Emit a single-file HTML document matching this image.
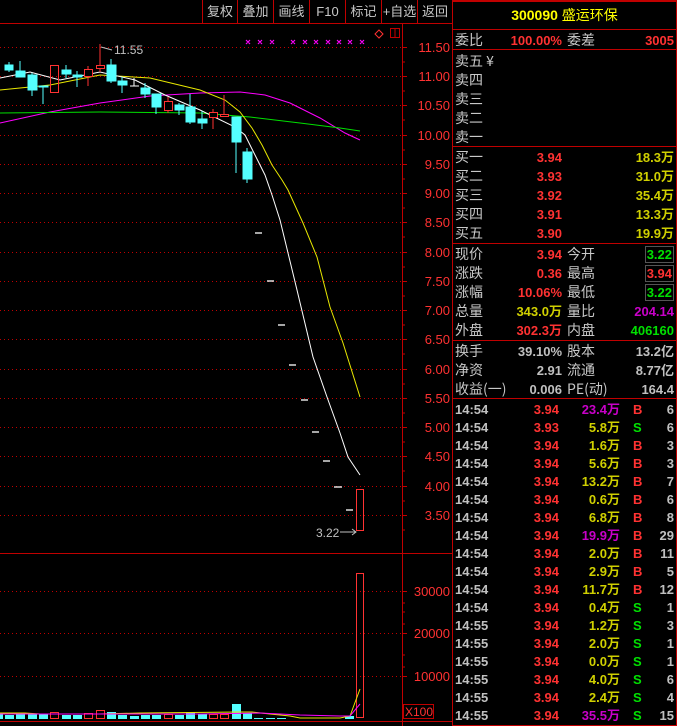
<!DOCTYPE html>
<html><head><meta charset="utf-8"><style>
*{margin:0;padding:0;box-sizing:border-box}
body{width:677px;height:726px;background:#000;overflow:hidden;position:relative;font-family:"Liberation Sans","Noto Sans CJK SC",sans-serif}
.r{position:absolute;left:452px;width:225px;height:19px;font-size:14px;line-height:19px}
.r span{position:absolute;white-space:nowrap}
.l{left:3px;color:#c8c8c8;font-family:"Noto Sans CJK SC",sans-serif}
.l2{left:115px;color:#c8c8c8;font-family:"Noto Sans CJK SC",sans-serif}
.v1{right:115px;font-weight:bold;font-size:13px}
.v2{right:3px;font-weight:bold;font-size:13px}
.red{color:#ff3232}.yel{color:#d0d000}.grn{color:#00e000}.mag{color:#c800c8}.gry{color:#c0c0c0}
.hl{position:absolute;left:452px;width:225px;height:1px;background:#c00000}
.box{border:1px solid #555;padding:0 1px;line-height:15px;top:1px}
.t{position:absolute;left:452px;width:225px;height:18px;font-size:13px;font-weight:bold;line-height:18px}
.t span{position:absolute;white-space:nowrap}
.btn{position:absolute;top:0;height:23px;line-height:23px;color:#c8c8c8;font-size:13px;text-align:center;border-left:1px solid #c00000;font-family:"Liberation Sans","Noto Sans CJK SC",sans-serif}
</style></head><body>
<svg width="452" height="726" style="position:absolute;left:0;top:0" xmlns="http://www.w3.org/2000/svg">
<line x1="0" y1="23.5" x2="452" y2="23.5" stroke="#c00000"/>
<line x1="402.5" y1="24" x2="402.5" y2="726" stroke="#c00000"/>
<line x1="0" y1="553.5" x2="452" y2="553.5" stroke="#c00000"/>
<line x1="0" y1="721.5" x2="452" y2="721.5" stroke="#c00000"/>
<g stroke="#c00000" stroke-dasharray="1,3">
<line x1="0" y1="47.5" x2="402" y2="47.5"/><line x1="0" y1="76.5" x2="402" y2="76.5"/><line x1="0" y1="105.5" x2="402" y2="105.5"/><line x1="0" y1="135.5" x2="402" y2="135.5"/><line x1="0" y1="164.5" x2="402" y2="164.5"/><line x1="0" y1="193.5" x2="402" y2="193.5"/><line x1="0" y1="222.5" x2="402" y2="222.5"/><line x1="0" y1="252.5" x2="402" y2="252.5"/><line x1="0" y1="281.5" x2="402" y2="281.5"/><line x1="0" y1="310.5" x2="402" y2="310.5"/><line x1="0" y1="339.5" x2="402" y2="339.5"/><line x1="0" y1="369.5" x2="402" y2="369.5"/><line x1="0" y1="398.5" x2="402" y2="398.5"/><line x1="0" y1="427.5" x2="402" y2="427.5"/><line x1="0" y1="456.5" x2="402" y2="456.5"/><line x1="0" y1="486.5" x2="402" y2="486.5"/><line x1="0" y1="515.5" x2="402" y2="515.5"/>
<line x1="0" y1="591.5" x2="402" y2="591.5"/><line x1="0" y1="633.5" x2="402" y2="633.5"/><line x1="0" y1="676.5" x2="402" y2="676.5"/>
</g>
<g stroke="#c00000">
<path d="M402 47.5h5M402 62h3M402 76.5h5M402 91h3M402 105.5h5M402 120h3M402 135.5h5M402 150h3M402 164.5h5M402 179h3M402 193.5h5M402 208h3M402 222.5h5M402 237h3M402 252.5h5M402 267h3M402 281.5h5M402 296h3M402 310.5h5M402 325h3M402 339.5h5M402 354h3M402 369.5h5M402 384h3M402 398.5h5M402 413h3M402 427.5h5M402 442h3M402 456.5h5M402 471h3M402 486.5h5M402 501h3M402 515.5h5M402 530h3"/>
<path d="M402 591.5h5M402 603h3M402 612h3M402 624h3M402 633.5h5M402 655h3M402 667h3M402 676.5h5"/>
</g>
<g fill="#ff3232" font-size="13" text-anchor="end" font-family="Liberation Sans">
<text x="450" y="52">11.50</text><text x="450" y="81">11.00</text><text x="450" y="110">10.50</text><text x="450" y="140">10.00</text><text x="450" y="169">9.50</text><text x="450" y="198">9.00</text><text x="450" y="227">8.50</text><text x="450" y="257">8.00</text><text x="450" y="286">7.50</text><text x="450" y="315">7.00</text><text x="450" y="344">6.50</text><text x="450" y="374">6.00</text><text x="450" y="403">5.50</text><text x="450" y="432">5.00</text><text x="450" y="461">4.50</text><text x="450" y="491">4.00</text><text x="450" y="520">3.50</text>
<text x="450" y="596">30000</text><text x="450" y="638">20000</text><text x="450" y="681">10000</text>
</g>
<rect x="403.5" y="704.5" width="30" height="14" fill="none" stroke="#c00000"/>
<text x="405" y="716" fill="#ff3232" font-size="12" font-family="Liberation Sans">X100</text>
<g fill="none" stroke="#ff3232"><path d="M379 30l4 4-4 4-4-4z"/><rect x="390.5" y="28.5" width="9" height="9" stroke="#c00000"/><line x1="395" y1="29" x2="395" y2="38" stroke="#c00000"/></g>
<g stroke="#ff00ff" stroke-width="1.2">
<path d="M246 40l4 4M250 40l-4 4M258 40l4 4M262 40l-4 4M270 40l4 4M274 40l-4 4M291 40l4 4M295 40l-4 4M303 40l4 4M307 40l-4 4M314 40l4 4M318 40l-4 4M326 40l4 4M330 40l-4 4M337 40l4 4M341 40l-4 4M348 40l4 4M352 40l-4 4M360 40l4 4M364 40l-4 4"/>
</g>
<text x="114" y="54" fill="#c0c0c0" font-size="12" font-family="Liberation Sans">11.55</text>
<path d="M101 47 L112 50" stroke="#c0c0c0"/>
<text x="316" y="537" fill="#c0c0c0" font-size="12" font-family="Liberation Sans">3.22</text>
<path d="M340 532 L356 532 M352 529 L356 532 L352 535" stroke="#c0c0c0" fill="none"/>
<polyline fill="none" stroke="#ff00ff" points="0,123 50,112 100,103 150,96 200,93 240,92 265,95 290,103 320,118 345,133 360,140"/>
<polyline fill="none" stroke="#00e000" points="0,113 100,112 200,113 250,117 300,123 340,128 360,131"/>
<polyline fill="none" stroke="#e8e800" points="0,90 50,85 100,75 150,78 200,90 225,100 240,112 252,128 262,145 272,165 282,180 288,190 303,223 317,257 330,307 343,343 360,397"/>
<polyline fill="none" stroke="#ffffff" points="0,78 30,72 60,80 100,72 135,80 165,95 200,110 235,127 245,135 255,155 265,175 272,195 280,220 297,290 313,357 327,397 340,433 348,457 360,475"/>
<g stroke="#54ffff" fill="#54ffff">
<line x1="9" y1="62" x2="9" y2="72"/><rect x="5" y="65" width="8" height="5"/>
<line x1="20" y1="61" x2="20" y2="77"/><rect x="16" y="71" width="9" height="6"/>
<line x1="32" y1="73" x2="32" y2="96"/><rect x="28" y="75" width="9" height="15"/>
<line x1="43" y1="86" x2="43" y2="104"/><rect x="39" y="86" width="9" height="1"/>
<line x1="66" y1="65" x2="66" y2="78"/><rect x="62" y="70" width="9" height="4"/>
<line x1="77" y1="71" x2="77" y2="87"/><rect x="73" y="75" width="9" height="2"/>
<line x1="111" y1="59" x2="111" y2="83"/><rect x="107" y="65" width="9" height="16"/>
<line x1="122" y1="77" x2="122" y2="93"/><rect x="118" y="81" width="9" height="4"/>
<line x1="145" y1="83" x2="145" y2="98"/><rect x="141" y="88" width="9" height="6"/>
<line x1="156" y1="94" x2="156" y2="114"/><rect x="152" y="94" width="9" height="13"/>
<line x1="179" y1="103" x2="179" y2="115"/><rect x="175" y="105" width="9" height="5"/>
<line x1="190" y1="94" x2="190" y2="124"/><rect x="186" y="107" width="9" height="15"/>
<line x1="202" y1="111" x2="202" y2="129"/><rect x="198" y="119" width="9" height="4"/>
<line x1="236" y1="117" x2="236" y2="173"/><rect x="232" y="117" width="9" height="25"/>
<line x1="247" y1="148" x2="247" y2="183"/><rect x="243" y="152" width="9" height="27"/>
</g>
<g stroke="#ff3232" fill="none">
<rect x="50.5" y="65.5" width="8" height="27"/>
<line x1="88" y1="66" x2="88" y2="86"/><rect x="84.5" y="69.5" width="8" height="7" fill="#000"/>
<line x1="100" y1="44" x2="100" y2="72"/><rect x="96.5" y="65.5" width="8" height="3" fill="#000"/>
<line x1="168" y1="97" x2="168" y2="113"/><rect x="164.5" y="101.5" width="8" height="9" fill="#000"/>
<line x1="213" y1="109" x2="213" y2="129"/><rect x="209.5" y="112.5" width="8" height="5" fill="#000"/>
<line x1="224" y1="95" x2="224" y2="117"/><rect x="220.5" y="114.5" width="8" height="2" fill="#000"/>
<rect x="356.5" y="489.5" width="7" height="41"/>
<rect x="356.5" y="573.5" width="7" height="144"/>
</g>
<path d="M130 86h9M134 78v8" stroke="#fff"/>
<g stroke="#fff" stroke-width="1.3">
<line x1="255" y1="233" x2="262" y2="233"/><line x1="267" y1="281" x2="274" y2="281"/><line x1="278" y1="325" x2="285" y2="325"/><line x1="289" y1="365" x2="296" y2="365"/><line x1="301" y1="400" x2="308" y2="400"/><line x1="312" y1="432" x2="319" y2="432"/><line x1="323" y1="461" x2="330" y2="461"/><line x1="334" y1="487" x2="342" y2="487"/><line x1="346" y1="510" x2="353" y2="510"/>
</g>
<g fill="#54ffff">
<rect x="0" y="714" width="3" height="5"/><rect x="5" y="715" width="9" height="4"/><rect x="16" y="713" width="9" height="6"/><rect x="28" y="714" width="9" height="5"/><rect x="39" y="714" width="9" height="5"/><rect x="62" y="715" width="9" height="4"/><rect x="73" y="715" width="9" height="4"/><rect x="107" y="712" width="9" height="7"/><rect x="118" y="715" width="9" height="4"/><rect x="130" y="716" width="9" height="3"/><rect x="141" y="715" width="9" height="4"/><rect x="152" y="715" width="9" height="4"/><rect x="175" y="715" width="9" height="4"/><rect x="186" y="712" width="9" height="7"/><rect x="198" y="714" width="9" height="5"/><rect x="232" y="704" width="9" height="15"/><rect x="243" y="713" width="9" height="6"/><rect x="254" y="718" width="9" height="1"/><rect x="266" y="718" width="9" height="1"/><rect x="277" y="718" width="9" height="1"/><rect x="345" y="716" width="9" height="3"/>
</g>
<g fill="none" stroke="#ff3232">
<rect x="50.5" y="712.5" width="8" height="6"/><rect x="84.5" y="713.5" width="8" height="5"/><rect x="96.5" y="710.5" width="8" height="8"/><rect x="164.5" y="714.5" width="8" height="4"/><rect x="209.5" y="714.5" width="8" height="4"/><rect x="220.5" y="714.5" width="8" height="4"/>
</g>
<polyline fill="none" stroke="#e8e800" points="0,713 25,713 40,714 100,714 140,713 240,712 252,712 270,714 290,716 300,718 340,718 350,716 360,689"/>
<polyline fill="none" stroke="#ff00ff" points="0,714 100,714 200,714 260,713 300,715 340,716 350,716 360,704"/>
</svg>
<div class="btn" style="left:202px;width:35px">复权</div>
<div class="btn" style="left:237px;width:36px">叠加</div>
<div class="btn" style="left:273px;width:36px">画线</div>
<div class="btn" style="left:309px;width:36px">F10</div>
<div class="btn" style="left:345px;width:36px">标记</div>
<div class="btn" style="left:381px;width:36px">+自选</div>
<div class="btn" style="left:417px;width:35px">返回</div>
<div style="position:absolute;left:452px;top:0;width:225px;height:726px;border:1px solid #c00000;border-top:2px solid #c00000"></div>
<div style="position:absolute;left:452px;top:5px;width:225px;text-align:center;color:#ffff00;font-size:14px;font-weight:bold;line-height:20px">300090 <span style="font-weight:normal;font-family:'Noto Sans CJK SC',sans-serif">盛运环保</span></div>
<div class="hl" style="top:29px"></div>
<div class="r" style="top:31px"><span class="l">委比</span><span class="v1 red">100.00%</span><span class="l2">委差</span><span class="v2 red">3005</span></div>
<div class="hl" style="top:49px"></div>
<div class="r" style="top:52px"><span class="l">卖五 ¥</span></div>
<div class="r" style="top:71px"><span class="l">卖四</span></div>
<div class="r" style="top:90px"><span class="l">卖三</span></div>
<div class="r" style="top:109px"><span class="l">卖二</span></div>
<div class="r" style="top:128px"><span class="l">卖一</span></div>
<div class="hl" style="top:146px"></div>
<div class="r" style="top:148px"><span class="l">买一</span><span class="v1 red">3.94</span><span class="v2 yel">18.3万</span></div>
<div class="r" style="top:167px"><span class="l">买二</span><span class="v1 red">3.93</span><span class="v2 yel">31.0万</span></div>
<div class="r" style="top:186px"><span class="l">买三</span><span class="v1 red">3.92</span><span class="v2 yel">35.4万</span></div>
<div class="r" style="top:205px"><span class="l">买四</span><span class="v1 red">3.91</span><span class="v2 yel">13.3万</span></div>
<div class="r" style="top:224px"><span class="l">买五</span><span class="v1 red">3.90</span><span class="v2 yel">19.9万</span></div>
<div class="hl" style="top:243px"></div>
<div class="r" style="top:245px"><span class="l">现价</span><span class="v1 red">3.94</span><span class="l2">今开</span><span class="v2 grn box">3.22</span></div>
<div class="r" style="top:264px"><span class="l">涨跌</span><span class="v1 red">0.36</span><span class="l2">最高</span><span class="v2 red box">3.94</span></div>
<div class="r" style="top:283px"><span class="l">涨幅</span><span class="v1 red">10.06%</span><span class="l2">最低</span><span class="v2 grn box">3.22</span></div>
<div class="r" style="top:302px"><span class="l">总量</span><span class="v1 yel">343.0万</span><span class="l2">量比</span><span class="v2 mag">204.14</span></div>
<div class="r" style="top:321px"><span class="l">外盘</span><span class="v1 red">302.3万</span><span class="l2">内盘</span><span class="v2 grn">406160</span></div>
<div class="hl" style="top:340px"></div>
<div class="r" style="top:342px"><span class="l">换手</span><span class="v1 gry">39.10%</span><span class="l2">股本</span><span class="v2 gry">13.2亿</span></div>
<div class="r" style="top:361px"><span class="l">净资</span><span class="v1 gry">2.91</span><span class="l2">流通</span><span class="v2 gry">8.77亿</span></div>
<div class="r" style="top:380px"><span class="l">收益(一)</span><span class="v1 gry">0.006</span><span class="l2">PE(动)</span><span class="v2 gry">164.4</span></div>
<div class="hl" style="top:398px"></div>
<div class="t" style="top:401px"><span class="gry" style="left:3px">14:54</span><span class="red" style="right:118px">3.94</span><span class="mag" style="right:57px">23.4万</span><span class="red" style="left:181px">B</span><span class="gry" style="right:3px">6</span></div>
<div class="t" style="top:419px"><span class="gry" style="left:3px">14:54</span><span class="red" style="right:118px">3.93</span><span class="yel" style="right:57px">5.8万</span><span class="grn" style="left:181px">S</span><span class="gry" style="right:3px">6</span></div>
<div class="t" style="top:437px"><span class="gry" style="left:3px">14:54</span><span class="red" style="right:118px">3.94</span><span class="yel" style="right:57px">1.6万</span><span class="red" style="left:181px">B</span><span class="gry" style="right:3px">3</span></div>
<div class="t" style="top:455px"><span class="gry" style="left:3px">14:54</span><span class="red" style="right:118px">3.94</span><span class="yel" style="right:57px">5.6万</span><span class="red" style="left:181px">B</span><span class="gry" style="right:3px">3</span></div>
<div class="t" style="top:473px"><span class="gry" style="left:3px">14:54</span><span class="red" style="right:118px">3.94</span><span class="yel" style="right:57px">13.2万</span><span class="red" style="left:181px">B</span><span class="gry" style="right:3px">7</span></div>
<div class="t" style="top:491px"><span class="gry" style="left:3px">14:54</span><span class="red" style="right:118px">3.94</span><span class="yel" style="right:57px">0.6万</span><span class="red" style="left:181px">B</span><span class="gry" style="right:3px">6</span></div>
<div class="t" style="top:509px"><span class="gry" style="left:3px">14:54</span><span class="red" style="right:118px">3.94</span><span class="yel" style="right:57px">6.8万</span><span class="red" style="left:181px">B</span><span class="gry" style="right:3px">8</span></div>
<div class="t" style="top:527px"><span class="gry" style="left:3px">14:54</span><span class="red" style="right:118px">3.94</span><span class="mag" style="right:57px">19.9万</span><span class="red" style="left:181px">B</span><span class="gry" style="right:3px">29</span></div>
<div class="t" style="top:545px"><span class="gry" style="left:3px">14:54</span><span class="red" style="right:118px">3.94</span><span class="yel" style="right:57px">2.0万</span><span class="red" style="left:181px">B</span><span class="gry" style="right:3px">11</span></div>
<div class="t" style="top:563px"><span class="gry" style="left:3px">14:54</span><span class="red" style="right:118px">3.94</span><span class="yel" style="right:57px">2.9万</span><span class="red" style="left:181px">B</span><span class="gry" style="right:3px">5</span></div>
<div class="t" style="top:581px"><span class="gry" style="left:3px">14:54</span><span class="red" style="right:118px">3.94</span><span class="yel" style="right:57px">11.7万</span><span class="red" style="left:181px">B</span><span class="gry" style="right:3px">12</span></div>
<div class="t" style="top:599px"><span class="gry" style="left:3px">14:54</span><span class="red" style="right:118px">3.94</span><span class="yel" style="right:57px">0.4万</span><span class="grn" style="left:181px">S</span><span class="gry" style="right:3px">1</span></div>
<div class="t" style="top:617px"><span class="gry" style="left:3px">14:55</span><span class="red" style="right:118px">3.94</span><span class="yel" style="right:57px">1.2万</span><span class="grn" style="left:181px">S</span><span class="gry" style="right:3px">3</span></div>
<div class="t" style="top:635px"><span class="gry" style="left:3px">14:55</span><span class="red" style="right:118px">3.94</span><span class="yel" style="right:57px">2.0万</span><span class="grn" style="left:181px">S</span><span class="gry" style="right:3px">1</span></div>
<div class="t" style="top:653px"><span class="gry" style="left:3px">14:55</span><span class="red" style="right:118px">3.94</span><span class="yel" style="right:57px">0.0万</span><span class="grn" style="left:181px">S</span><span class="gry" style="right:3px">1</span></div>
<div class="t" style="top:671px"><span class="gry" style="left:3px">14:55</span><span class="red" style="right:118px">3.94</span><span class="yel" style="right:57px">4.0万</span><span class="grn" style="left:181px">S</span><span class="gry" style="right:3px">6</span></div>
<div class="t" style="top:689px"><span class="gry" style="left:3px">14:55</span><span class="red" style="right:118px">3.94</span><span class="yel" style="right:57px">2.4万</span><span class="grn" style="left:181px">S</span><span class="gry" style="right:3px">4</span></div>
<div class="t" style="top:707px"><span class="gry" style="left:3px">14:55</span><span class="red" style="right:118px">3.94</span><span class="mag" style="right:57px">35.5万</span><span class="grn" style="left:181px">S</span><span class="gry" style="right:3px">15</span></div>
</body></html>
